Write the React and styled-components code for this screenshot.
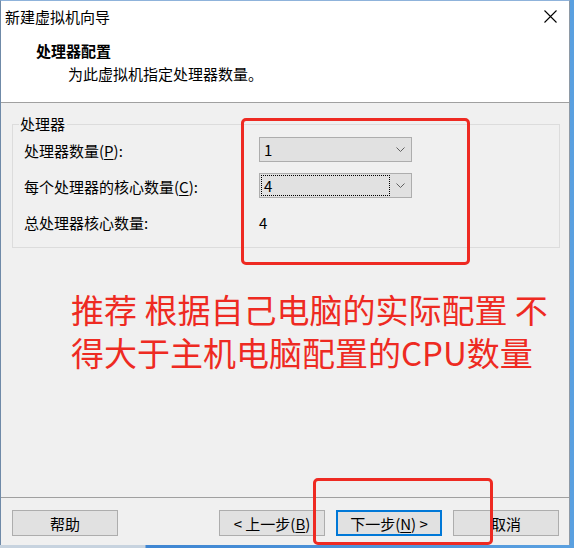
import React from "react";
import styled, { createGlobalStyle } from "styled-components";

const GlobalStyle = createGlobalStyle`
  html, body {
    margin: 0;
    padding: 0;
    background: #f4f7fb;
  }
  body {
    font-family: "Noto Sans CJK SC", "Microsoft YaHei", sans-serif;
    font-size: 15px;
    color: #000;
  }
`;

const Desktop = styled.div`
  position: relative;
  width: 574px;
  height: 548px;
  overflow: hidden;
  background: linear-gradient(to right, #c7d3df 0, #c7d3df 145px, #3f86d2 146px, #5aa0e0 100%);
`;

const Window = styled.div`
  display: flex;
  flex-direction: column;
  width: 568px;
  height: 544px;
  border-top: 1px solid #8fb3db;
  border-left: 1px solid #6f8aa8;
  border-right: 1px solid #8e9aa6;
  background: #f0f0f0;
  box-sizing: content-box;
`;

const TitleBar = styled.div`
  display: flex;
  align-items: center;
  justify-content: space-between;
  height: 31px;
  padding: 0 12px 0 4px;
  background: #fff;
`;

const Title = styled.span`
  font-size: 15px;
  line-height: 20px;
`;

const CloseIcon = () => (
  <svg width="13" height="13" viewBox="0 0 13 13">
    <path d="M0.5 0.5 L12.5 12.5 M12.5 0.5 L0.5 12.5" stroke="#000" strokeWidth="1.1" fill="none" />
  </svg>
);

const Header = styled.div`
  display: flex;
  flex-direction: column;
  height: 71px;
  padding: 8px 0 0 35px;
  box-sizing: border-box;
  background: #fff;
  border-bottom: 1px solid #a0a0a0;
`;

const HeaderTitle = styled.div`
  font-weight: 700;
  line-height: 22px;
`;

const HeaderText = styled.div`
  padding-left: 32px;
  line-height: 24px;
`;

const Body = styled.div`
  flex: 1;
  padding: 12px 9px 0 11px;
`;

const GroupBox = styled.fieldset`
  margin: 0;
  padding: 4px 0 13px 0;
  border: 1px solid #dcdcdc;
  border-radius: 0;
`;

const Legend = styled.legend`
  margin-left: 6px;
  padding: 0 2px 0 1px;
  line-height: 18px;
`;

const Grid = styled.div`
  display: grid;
  grid-template-columns: 235px 153px;
  grid-auto-rows: 25px;
  row-gap: 11px;
  align-items: center;
  padding-left: 11px;
`;

const Label = styled.span`
  line-height: 20px;
  padding-top: 2px;
`;

const Key = styled.span`
  text-decoration: underline;
  text-underline-offset: 2px;
`;

const Combo = styled.div`
  display: flex;
  align-items: center;
  justify-content: space-between;
  height: 25px;
  box-sizing: border-box;
  padding: 0 6px 0 2px;
  background: #e1e1e1;
  border: 1px solid #adadad;
`;

const ComboValue = styled.span`
  display: flex;
  align-items: center;
  width: 127px;
  height: 19px;
  padding-left: 2px;
  box-sizing: border-box;
  outline: ${(p) => (p.$focused ? "1px dotted #000" : "none")};
`;

const Chevron = () => (
  <svg width="9" height="5" viewBox="0 0 9 5">
    <path d="M0.5 0.5 L4.5 4.5 L8.5 0.5" stroke="#606060" strokeWidth="1" fill="none" />
  </svg>
);

const Value = styled.span`
  padding-top: 2px;
`;

const Footer = styled.div`
  display: flex;
  align-items: flex-start;
  justify-content: space-between;
  height: 48px;
  padding: 12px 10px 0 11px;
  box-sizing: border-box;
  border-top: 1px solid #a0a0a0;
`;

const ButtonGroup = styled.div`
  display: flex;
  gap: 11px;
`;

const Button = styled.button`
  width: 106px;
  height: 26px;
  padding: 0;
  box-sizing: border-box;
  font-family: inherit;
  font-size: 15px;
  color: #000;
  background: #e1e1e1;
  border: ${(p) => (p.$primary ? "2px solid #0078d7" : "1px solid #adadad")};
`;

const Mark = styled.div`
  position: absolute;
  border: 3.5px solid #ee2a22;
  border-radius: 5px;
  box-sizing: border-box;
`;

const Note = styled.div`
  position: absolute;
  left: 71px;
  top: 288px;
  font-size: 33px;
  color: #ee2a22;
  white-space: nowrap;
`;

const NoteLine = styled.div`
  height: 43px;
  line-height: 43px;
`;

export default function App() {
  return (
    <>
      <GlobalStyle />
      <Desktop>
        <Window>
          <TitleBar>
            <Title>新建虚拟机向导</Title>
            <CloseIcon />
          </TitleBar>
          <Header>
            <HeaderTitle>处理器配置</HeaderTitle>
            <HeaderText>为此虚拟机指定处理器数量。</HeaderText>
          </Header>
          <Body>
            <GroupBox>
              <Legend>处理器</Legend>
              <Grid>
                <Label>
                  处理器数量(<Key>P</Key>):
                </Label>
                <Combo>
                  <ComboValue>1</ComboValue>
                  <Chevron />
                </Combo>
                <Label>
                  每个处理器的核心数量(<Key>C</Key>):
                </Label>
                <Combo>
                  <ComboValue $focused>4</ComboValue>
                  <Chevron />
                </Combo>
                <Label>总处理器核心数量:</Label>
                <Value>4</Value>
              </Grid>
            </GroupBox>
          </Body>
          <Footer>
            <Button>帮助</Button>
            <ButtonGroup>
              <Button>
                &lt; 上一步(<Key>B</Key>)
              </Button>
              <Button $primary>
                下一步(<Key>N</Key>) &gt;
              </Button>
              <Button>取消</Button>
            </ButtonGroup>
          </Footer>
        </Window>
        <Mark style={{ left: 241, top: 118, width: 229, height: 147 }} />
        <Mark style={{ left: 313, top: 478, width: 180, height: 67 }} />
        <Note>
          <NoteLine>推荐 根据自己电脑的实际配置 不</NoteLine>
          <NoteLine>得大于主机电脑配置的CPU数量</NoteLine>
        </Note>
      </Desktop>
    </>
  );
}
